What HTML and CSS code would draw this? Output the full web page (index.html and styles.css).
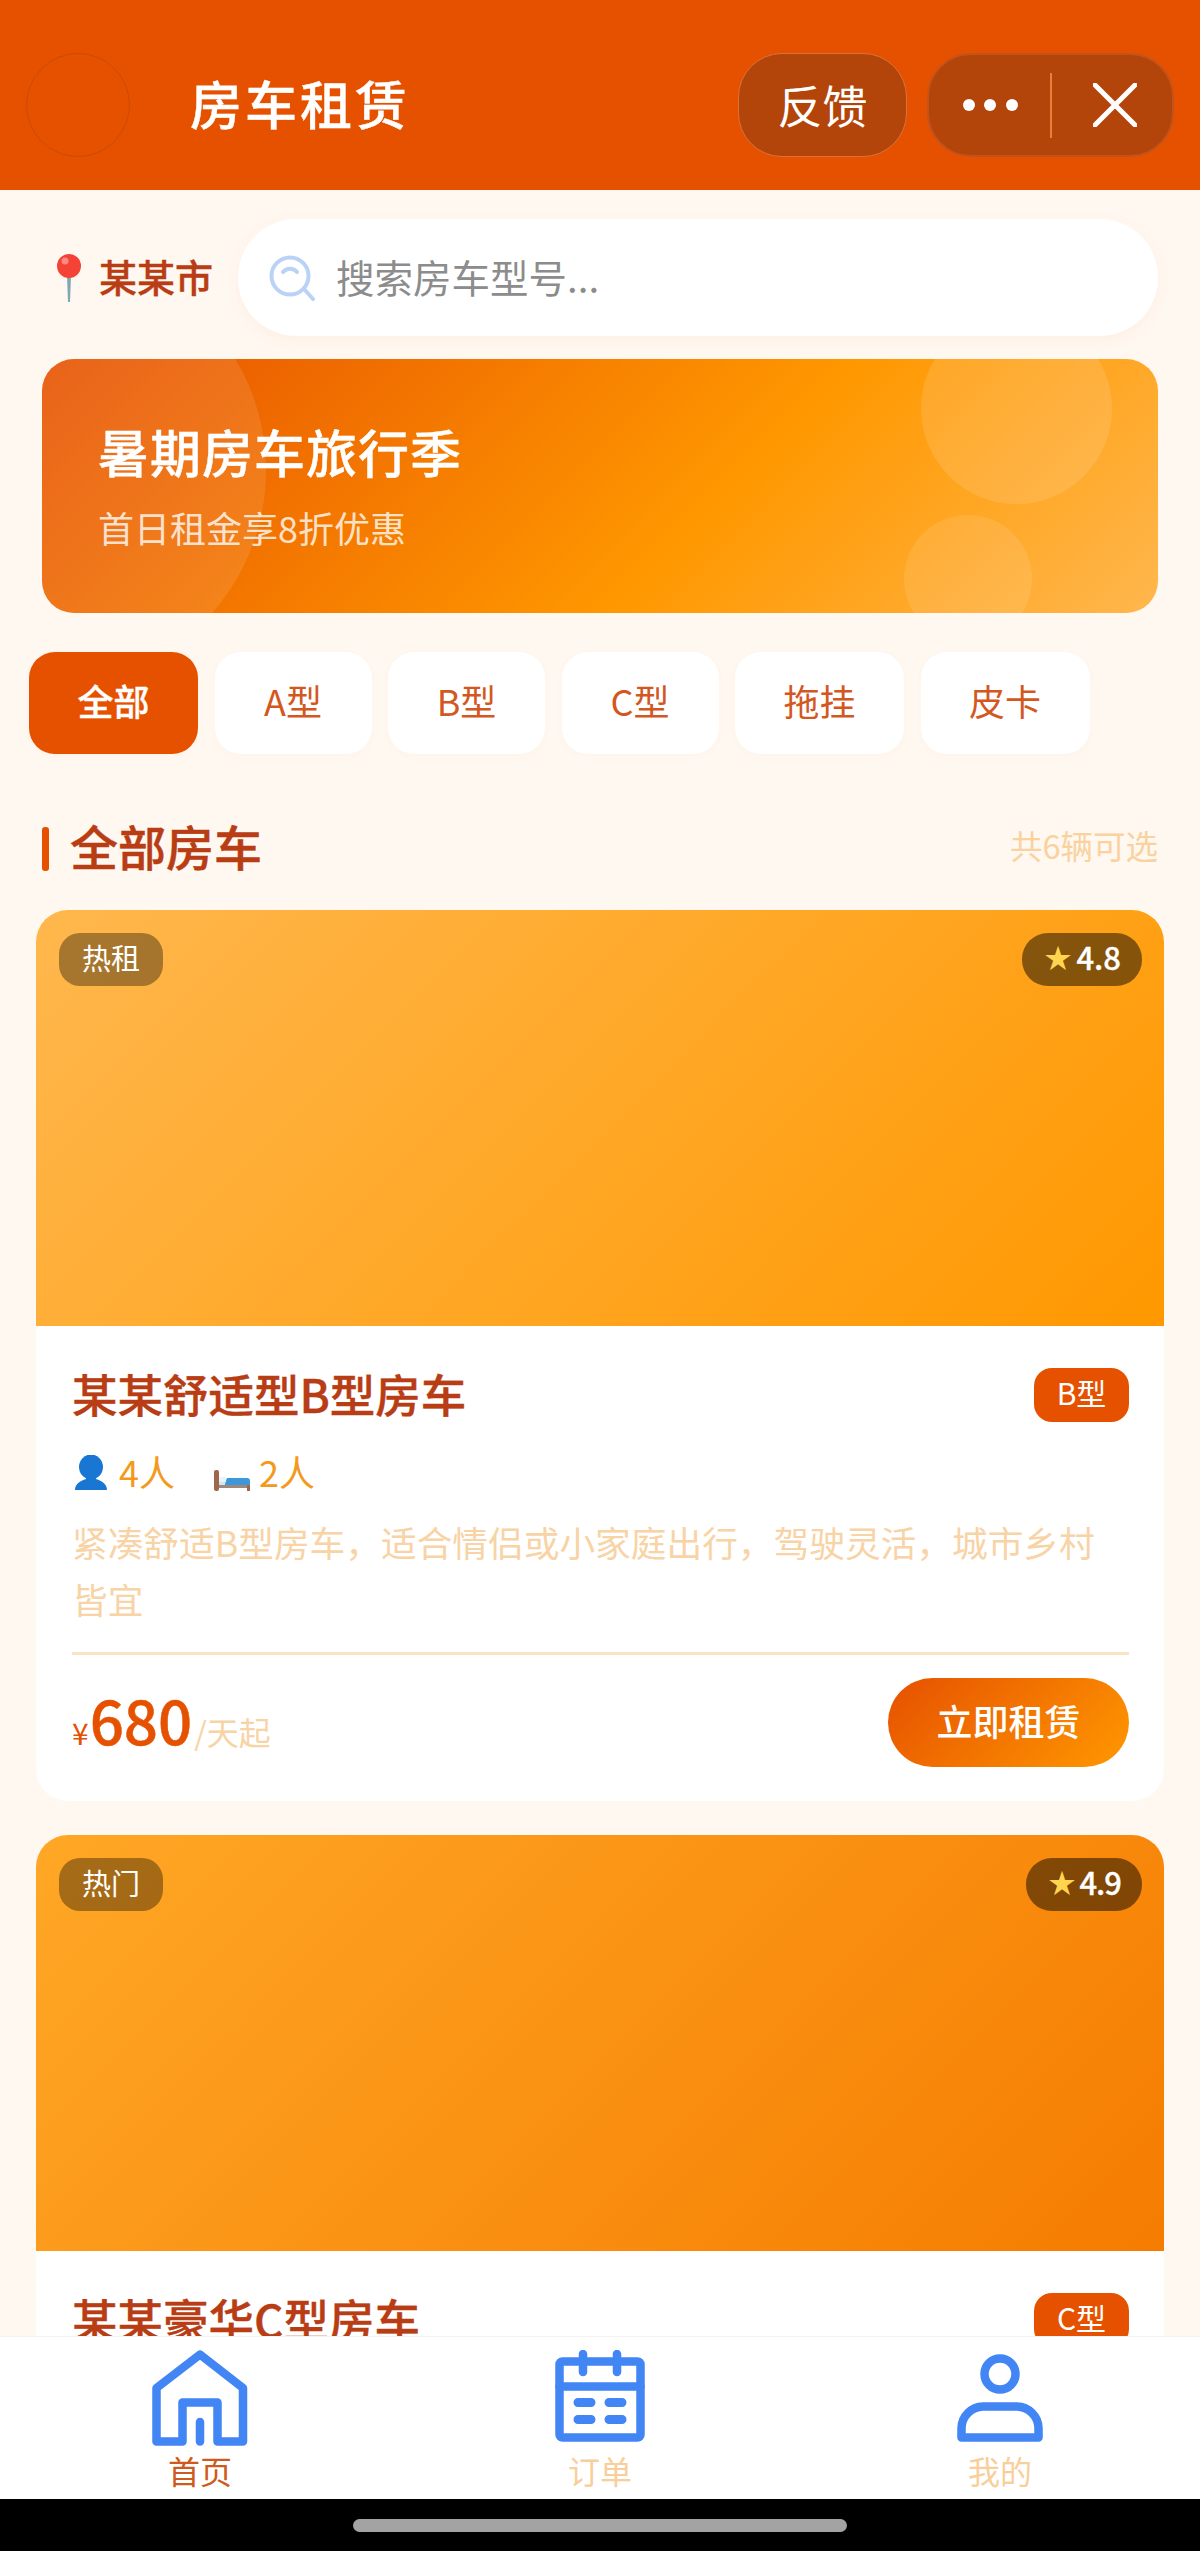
FILE: index.html
```html
<!DOCTYPE html>
<html lang="zh-CN">
<head>
<meta charset="utf-8">
<title>房车租赁</title>
<link rel="stylesheet" href="styles.css">
</head>
<body>
<div class="page">
  <header class="topbar">
    <div class="avatar"></div>
    <h1 class="app-title">房车租赁</h1>
    <button class="feedback">反馈</button>
    <div class="capsule">
      <div class="dots"><i></i><i></i><i></i></div>
      <div class="capsule-sep"></div>
      <svg class="close" viewBox="0 0 44 44"><path d="M2 2 L42 42 M42 2 L2 42"/></svg>
    </div>
  </header>

  <div class="search-row">
    <div class="location">
      <svg class="pin" viewBox="0 0 26 48">
        <path d="M12 22 L13 48 L14 22 Z" fill="#7fa8b4" stroke="#7fa8b4" stroke-width="2"/>
        <circle cx="13" cy="12" r="12" fill="#f44336"/>
        <circle cx="9" cy="7" r="3.5" fill="#fb8a80"/>
      </svg>
      <span>某某市</span>
    </div>
    <div class="search">
      <svg class="search-icon" viewBox="0 0 46 46"><circle cx="21" cy="21" r="18.5"/><path d="M14 17 A9 9 0 0 1 28 17 M35 34 L44 44"/></svg>
      <span>搜索房车型号...</span>
    </div>
  </div>

  <section class="banner">
    <div class="blob blob-a"></div>
    <div class="blob blob-b"></div>
    <div class="blob blob-c"></div>
    <h2 class="banner-title">暑期房车旅行季</h2>
    <p class="banner-sub">首日租金享8折优惠</p>
  </section>

  <nav class="chips">
    <div class="chip active">全部</div>
    <div class="chip">A型</div>
    <div class="chip">B型</div>
    <div class="chip">C型</div>
    <div class="chip">拖挂</div>
    <div class="chip">皮卡</div>
  </nav>

  <div class="section-head">
    <h3 class="section-title">全部房车</h3>
    <span class="section-count">共6辆可选</span>
  </div>

  <article class="card">
    <div class="card-img img-one">
      <span class="tag">热租</span>
      <span class="rating"><b>★</b>4.8</span>
    </div>
    <div class="card-body">
      <div class="card-head">
        <h4 class="card-title">某某舒适型B型房车</h4>
        <span class="type">B型</span>
      </div>
      <div class="meta">
        <span class="meta-item">
          <svg class="meta-icon" viewBox="0 0 32 35"><ellipse cx="16" cy="12" rx="12" ry="12.5" fill="#1976d2"/><path d="M11 20 H21 V24 C27 26 32 29 32 35 H0 C0 29 5 26 11 24 Z" fill="#1976d2"/></svg>
          4人
        </span>
        <span class="meta-item bed-item">
          <svg class="meta-icon bed" viewBox="0 0 36 21"><rect x="0" y="14" width="36" height="4" fill="#a08878"/><rect x="33" y="15" width="3" height="6" fill="#a0664a"/><rect x="3" y="9" width="33" height="6" fill="#cfe6f5"/><path d="M11 14 L13 8 H33 Q36 8 36 11 V15 H11 Z" fill="#3d97dc"/><rect x="5" y="7" width="7" height="5" rx="1" fill="#e8f3fa"/><rect x="0" y="0" width="5" height="21" rx="2" fill="#a0664a"/></svg>
          2人
        </span>
      </div>
      <p class="desc">紧凑舒适B型房车，适合情侣或小家庭出行，驾驶灵活，城市乡村皆宜</p>
      <div class="card-foot">
        <div class="price"><span class="cur">¥</span><span class="num">680</span><span class="unit">/天起</span></div>
        <button class="rent">立即租赁</button>
      </div>
    </div>
  </article>

  <article class="card">
    <div class="card-img img-two">
      <span class="tag">热门</span>
      <span class="rating tight"><b>★</b>4.9</span>
    </div>
    <div class="card-body">
      <div class="card-head">
        <h4 class="card-title">某某豪华C型房车</h4>
        <span class="type">C型</span>
      </div>
    </div>
  </article>

  <footer class="dock">
    <div class="tabs">
      <div class="tab on">
        <svg class="tab-icon" viewBox="0 0 96 96"><path d="M48 4.5 L91 38 V91.5 H65.5 V52.5 H30.5 V91.5 H4.5 V38 Z"/><path d="M48 72 V91.5"/></svg>
        <span>首页</span>
      </div>
      <div class="tab">
        <svg class="tab-icon" viewBox="0 0 96 96"><rect x="7.5" y="11.5" width="81" height="76" rx="3"/><path d="M7.5 36.5 H88.5 M31 4 V22 M65 4 V22"/><path class="pill" d="M26 52.5 H39 M57 52.5 H70 M26 69.5 H39 M57 69.5 H70"/></svg>
        <span>订单</span>
      </div>
      <div class="tab">
        <svg class="tab-icon" viewBox="0 0 96 96"><circle cx="48" cy="24" r="15.5"/><path d="M9.5 87.5 V78 A22 22 0 0 1 31 56.5 H65 A22 22 0 0 1 86.5 78 V87.5 Z"/></svg>
        <span>我的</span>
      </div>
    </div>
    <div class="home-strip"><div class="home-bar"></div></div>
  </footer>
</div>
</body>
</html>
```

FILE: styles.css
```css
* { box-sizing: border-box; margin: 0; padding: 0; }
html, body { width: 1200px; height: 2551px; overflow: hidden; }
body {
  font-family: "Noto Sans CJK SC", "Noto Sans", sans-serif;
  background: #fff8f0;
}
.page { position: relative; width: 1200px; height: 2551px; overflow: hidden; background: #fff8f0; }

/* top bar */
.topbar {
  height: 190px;
  background: #e65100;
  display: flex;
  align-items: flex-start;
  padding: 53px 26px 0;
}
.avatar { width: 104px; height: 104px; border-radius: 50%; border: 1px solid #c94a0b; }
.app-title {
  margin-left: 60px;
  height: 104px;
  line-height: 100px;
  font-size: 52px;
  font-weight: 500;
  -webkit-text-stroke: .4px #fff;
  letter-spacing: 3px;
  color: #fff;
  flex: 1;
}
.feedback {
  width: 169px;
  height: 104px;
  border-radius: 44px;
  border: 1px solid #d9733c;
  background: #b3440a;
  color: #fff;
  font: 400 45px/98px "Noto Sans CJK SC", sans-serif;
}
.capsule {
  margin-left: 20px;
  width: 247px;
  height: 104px;
  border-radius: 44px;
  border: 2px solid #c2531c;
  background: #b3440a;
  display: flex;
  align-items: center;
}
.dots { width: 121px; display: flex; gap: 9.5px; justify-content: center; padding-left: 1px; }
.dots i { width: 12px; height: 12px; border-radius: 50%; background: #fff; }
.capsule-sep { width: 1.5px; height: 65px; background: #e8803a; }
.close { width: 44px; height: 44px; margin-left: 41px; }
.close path { stroke: #fff; stroke-width: 5; fill: none; stroke-linecap: round; }

/* search */
.search-row { display: flex; align-items: center; padding: 29px 42px 0 42px; }
.location { width: 196px; display: flex; align-items: center; gap: 20px; }
.pin { width: 26px; height: 48px; margin-left: 14px; flex: none; }
.location span { font-size: 38px; font-weight: 500; -webkit-text-stroke: .4px #b83c14; color: #b83c14; line-height: 46px; white-space: nowrap; margin-left: -3px; padding-bottom: 3px; }
.search {
  flex: 1;
  height: 117px;
  background: #fff;
  border-radius: 58px;
  display: flex;
  align-items: center;
  padding-left: 31px;
  box-shadow: 0 4px 16px rgba(230, 81, 0, .05);
}
.search-icon { width: 46px; height: 46px; flex: none; }
.search-icon circle, .search-icon path { fill: none; stroke: #b9d2f6; stroke-width: 4; stroke-linecap: round; }
.search span { margin-left: 21px; font-size: 38.5px; color: #8c8c8c; padding-bottom: 4px; }

/* banner */
.banner {
  position: relative;
  overflow: hidden;
  margin: 23px 42px 0 42px;
  height: 254px;
  border-radius: 32px;
  background: linear-gradient(135deg, #e65100 0%, #ff9800 60%, #ffb74d 100%);
  padding: 57px 0 0 56px;
}
.blob { position: absolute; border-radius: 50%; background: rgba(255, 255, 255, .1); }
.blob-a { width: 434px; height: 434px; left: -210px; top: -106px; }
.blob-b { width: 191px; height: 191px; left: 879px; top: -46px; background: rgba(255, 255, 255, .12); }
.blob-c { width: 128px; height: 128px; left: 862px; top: 156px; }
.banner-title { position: relative; font-size: 51px; font-weight: 500; -webkit-text-stroke: .4px #fff; line-height: 70px; color: #fff; letter-spacing: 1px; }
.banner-sub { position: relative; margin-top: 15px; font-size: 36px; line-height: 52px; color: rgba(255, 255, 255, .78); }

/* chips */
.chips { display: flex; gap: 16.5px; margin-top: 39px; padding-left: 29px; }
.chip {
  height: 102px;
  min-width: 157px;
  padding: 0 48.5px;
  border-radius: 26px;
  background: #fff;
  color: #d2581f;
  font-size: 36px;
  line-height: 96px;
  text-align: center;
  white-space: nowrap;
  box-shadow: 0 2px 6px rgba(230, 81, 0, .03);
}
.chip.active { background: #e65100; color: #fff; font-weight: 500; -webkit-text-stroke: .4px #fff; }

/* section heading */
.section-head {
  display: flex;
  align-items: flex-start;
  justify-content: space-between;
  margin: 68px 42px 0 42px;
  height: 52px;
  position: relative;
}
.section-head::before {
  content: "";
  position: absolute;
  left: 0;
  top: 5px;
  width: 7px;
  height: 44px;
  border-radius: 3px;
  background: #e65100;
}
.section-title { padding-left: 28px; font-size: 48px; font-weight: 500; -webkit-text-stroke: .5px #b83c14; color: #b83c14; line-height: 46px; }
.section-count { font-size: 32.5px; color: #f9d29f; line-height: 46px; }

/* cards */
.card { margin: 36px 36px 0; border-radius: 32px; background: #fff; overflow: hidden; }
.card + .card { margin-top: 34px; }
.card-img { height: 416px; position: relative; }
.img-one { background: linear-gradient(135deg, #ffb74d 0%, #ff9800 100%); }
.img-two { background: linear-gradient(135deg, #ffa726 0%, #f57c00 100%); }
.tag {
  position: absolute;
  left: 23px;
  top: 23px;
  width: 104px;
  height: 53px;
  border-radius: 21px;
  background: rgba(0, 0, 0, .35);
  color: #fff;
  font-size: 29px;
  line-height: 48px;
  text-align: center;
}
.rating {
  position: absolute;
  right: 22px;
  top: 23px;
  height: 53px;
  padding: 0 21px 0 22px;
  border-radius: 26px;
  background: rgba(0, 0, 0, .48);
  color: #fff;
  font-size: 31px;
  font-weight: 500;
  -webkit-text-stroke: .3px #fff;
  line-height: 48px;
}
.rating b { color: #ffd54f; font-size: 27px; margin-right: 5px; font-weight: 400; -webkit-text-stroke: 0; position: relative; top: -2px; }
.rating.tight { letter-spacing: -1px; }
.card-body { padding: 42px 35px 34px 36px; }
.card-head { display: flex; justify-content: space-between; align-items: flex-start; height: 54px; }
.card-title { font-size: 45.5px; font-weight: 500; -webkit-text-stroke: .4px #b83c14; line-height: 50px; color: #b83c14; }
.type {
  width: 95px;
  height: 54px;
  border-radius: 18px;
  background: #e65100;
  color: #fff;
  font-size: 30px;
  line-height: 49px;
  text-align: center;
}
.meta { display: flex; gap: 39px; margin-top: 31px; height: 46px; }
.meta-item { display: flex; align-items: flex-start; gap: 12px; font-size: 36px; line-height: 36px; color: #f39a1d; }
.bed-item { gap: 9px; }
.meta-icon { width: 32px; height: 35px; margin: 2px 0 0 3px; }
.meta-icon.bed { width: 36px; height: 21px; margin: 17px 0 0; }
.desc { margin-top: 14px; font-size: 35.7px; line-height: 57px; color: #f8d3a5; }
.card-foot {
  margin-top: 25px;
  border-top: 3px solid #fbe3c6;
  padding-top: 23px;
  display: flex;
  justify-content: space-between;
  align-items: flex-start;
}
.price { display: flex; align-items: baseline; color: #e65100; padding-top: 2px; }
.cur { font-size: 30px; }
.num { font-size: 60px; font-weight: 500; -webkit-text-stroke: .5px #e65100; line-height: 78px; margin-left: 1px; }
.unit { font-size: 32px; color: #f8d3a5; margin-left: 2px; }
.rent {
  width: 241px;
  height: 89px;
  border: 0;
  border-radius: 45px;
  padding-bottom: 6px;
  background: linear-gradient(135deg, #e65100, #ff9800);
  color: #fff;
  font: 500 36px/80px "Noto Sans CJK SC", sans-serif;
}

/* bottom dock */
.dock { position: absolute; left: 0; right: 0; bottom: 0; }
.tabs {
  height: 163px;
  background: #fff;
  border-top: 1px solid #f2f2f2;
  display: grid;
  grid-template-columns: repeat(3, 1fr);
  padding-top: 13px;
}
.tab { display: flex; flex-direction: column; align-items: center; font-size: 32px; line-height: 44px; color: #f8cf9b; }
.tab.on { color: #cf5a20; }
.tab-icon { width: 96px; height: 96px; margin-bottom: 2px; }
.tab-icon path, .tab-icon rect, .tab-icon circle {
  fill: none;
  stroke: #4285f4;
  stroke-width: 8.5;
  stroke-linejoin: round;
  stroke-linecap: round;
}
.tab-icon .pill { stroke-width: 9; }
.home-strip { height: 52px; background: #000; display: flex; justify-content: center; padding-top: 20px; }
.home-bar { width: 494px; height: 13px; border-radius: 7px; background: #a3a3a3; }
```
